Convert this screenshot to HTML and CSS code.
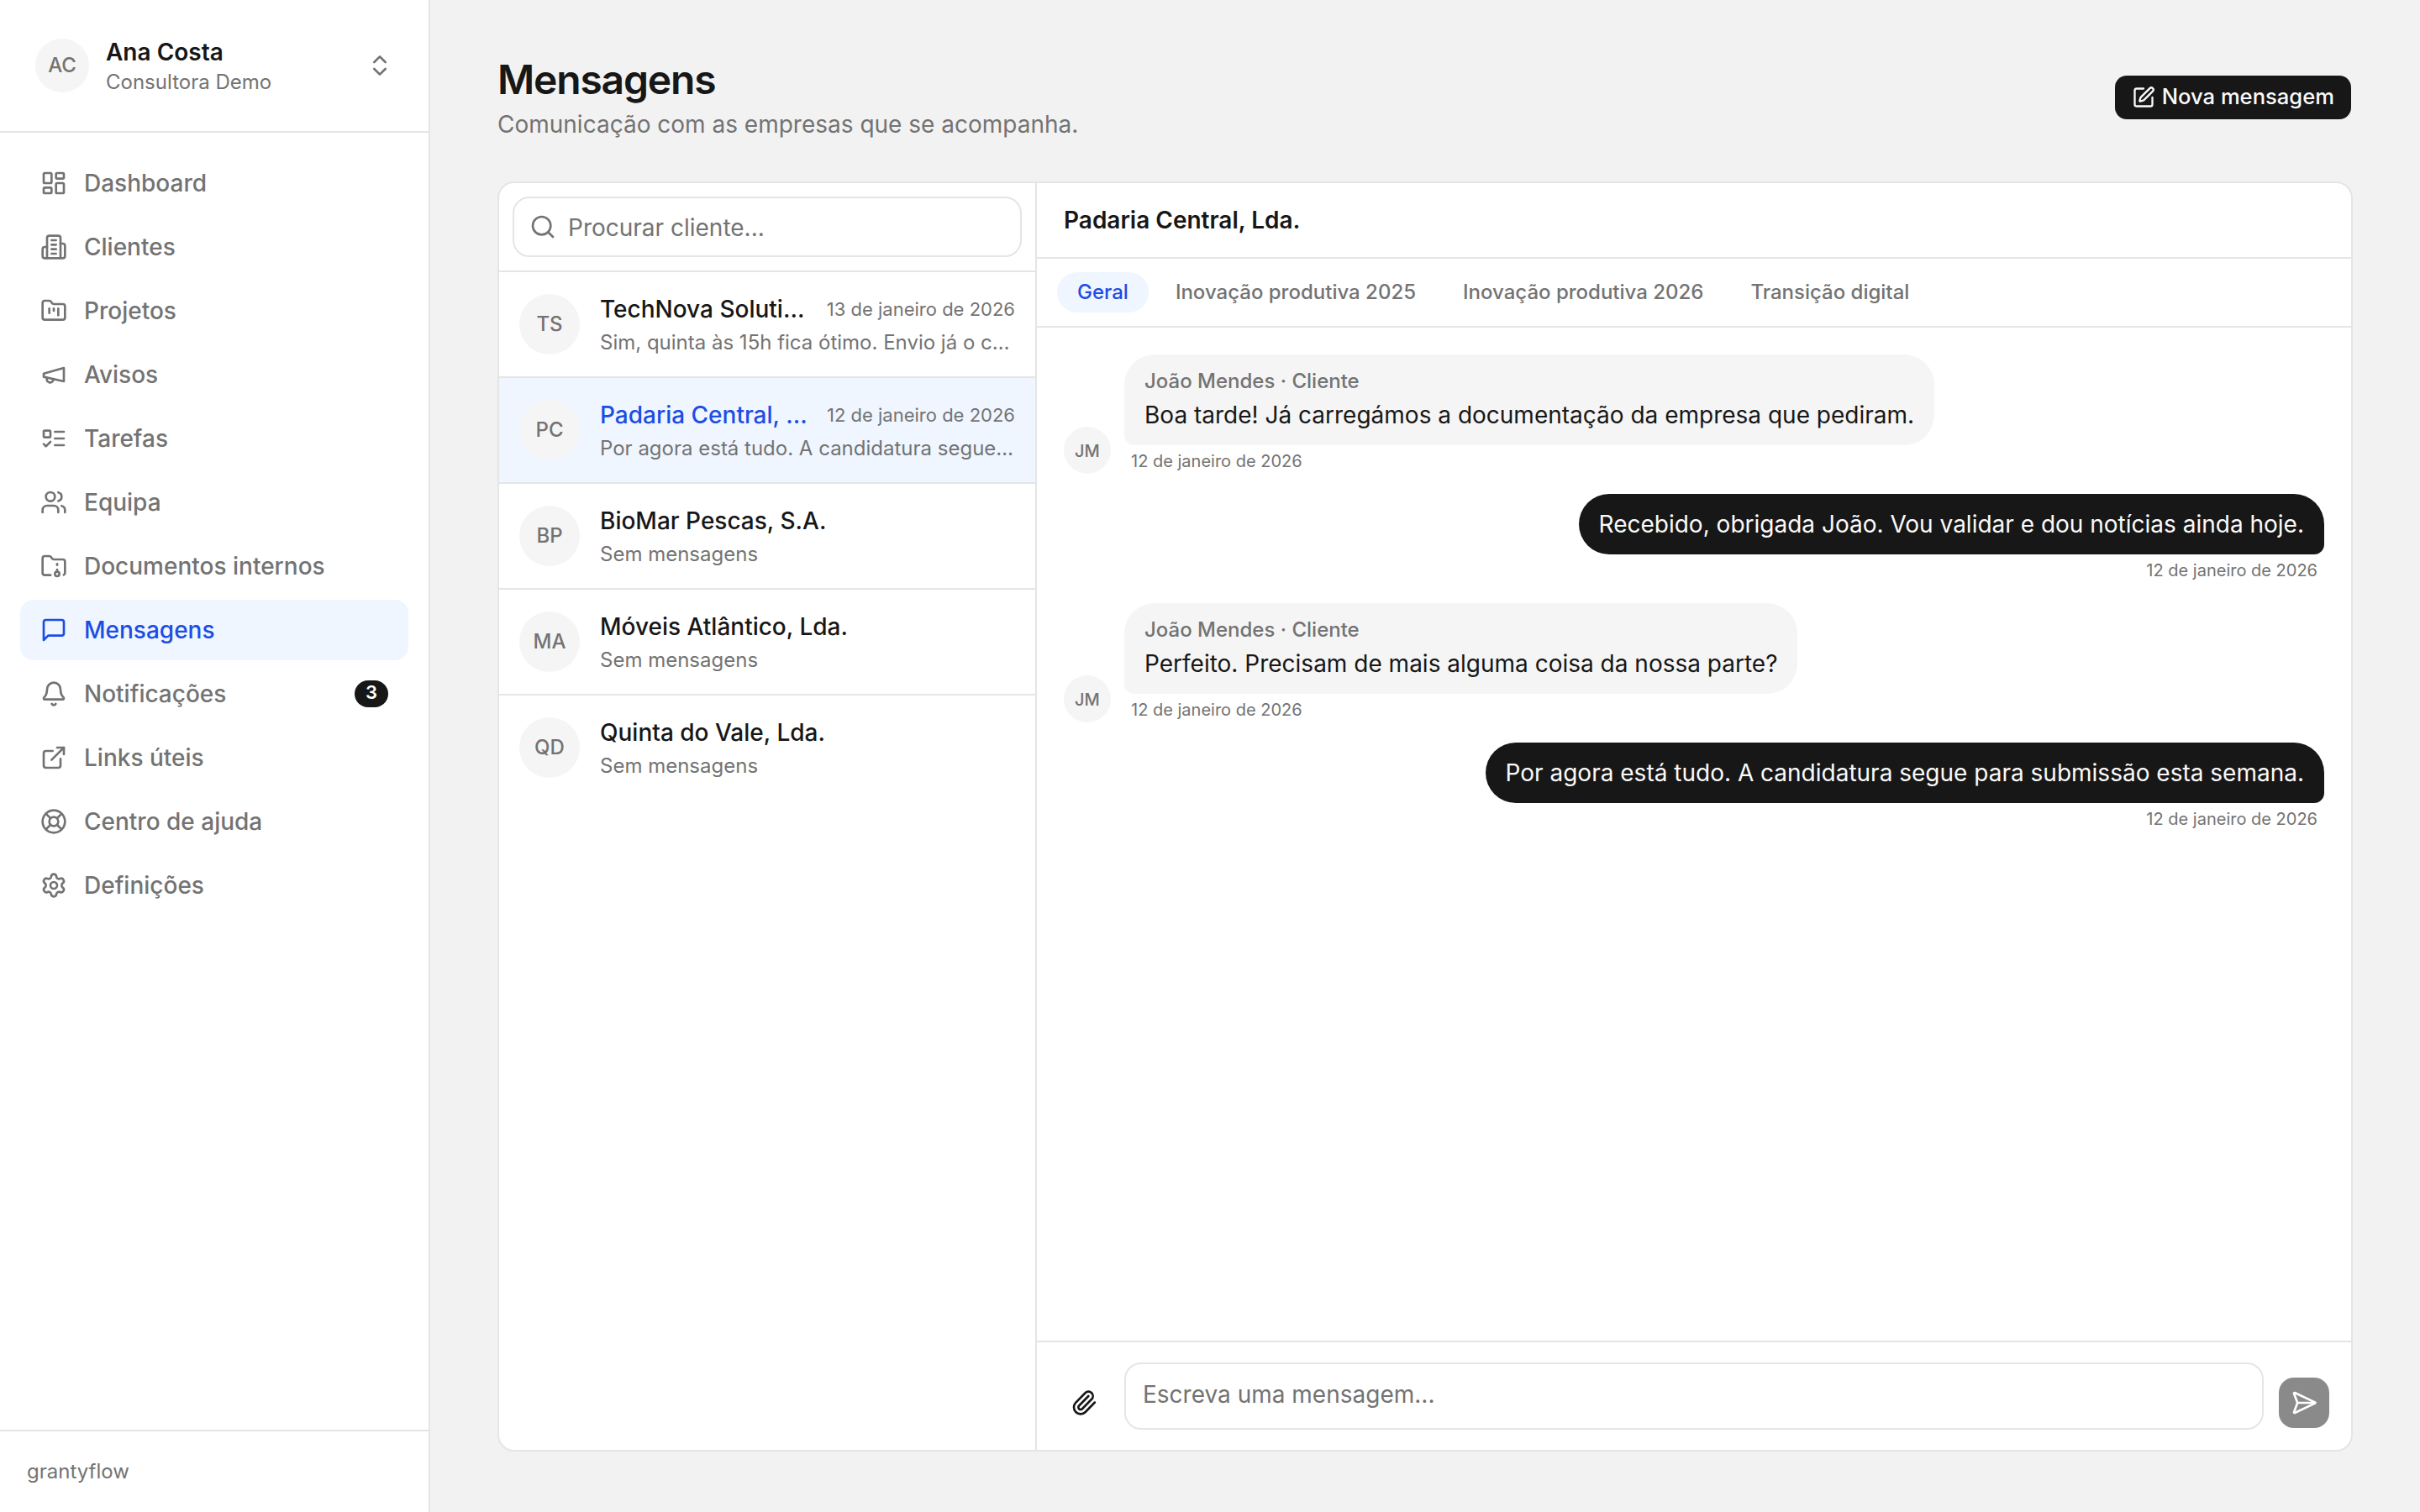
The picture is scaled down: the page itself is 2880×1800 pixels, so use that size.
FILE: index.html
```html
<!DOCTYPE html>
<html lang="pt">
  <head>
    <meta charset="utf-8" />
    <title>Mensagens - grantyflow</title>
    <link rel="stylesheet" href="styles.css" />
  </head>
  <body>
    <aside class="sidebar">
      <div class="account">
        <span class="avatar">AC</span>
        <div class="account-text">
          <div class="account-name">Ana Costa</div>
          <div class="account-org">Consultora Demo</div>
        </div>
        <svg class="icon" viewBox="0 0 24 24"><path d="m7 15 5 5 5-5" /><path d="m7 9 5-5 5 5" /></svg>
      </div>

      <nav class="nav">
        <a class="nav-item">
          <svg class="icon" viewBox="0 0 24 24"><rect width="7" height="9" x="3" y="3" rx="1" /><rect width="7" height="5" x="14" y="3" rx="1" /><rect width="7" height="9" x="14" y="12" rx="1" /><rect width="7" height="5" x="3" y="16" rx="1" /></svg>
          <span>Dashboard</span>
        </a>
        <a class="nav-item">
          <svg class="icon" viewBox="0 0 24 24"><path d="M6 22V4a2 2 0 0 1 2-2h8a2 2 0 0 1 2 2v18Z" /><path d="M6 12H4a2 2 0 0 0-2 2v6a2 2 0 0 0 2 2h2" /><path d="M18 9h2a2 2 0 0 1 2 2v9a2 2 0 0 1-2 2h-2" /><path d="M10 6h4" /><path d="M10 10h4" /><path d="M10 14h4" /><path d="M10 18h4" /></svg>
          <span>Clientes</span>
        </a>
        <a class="nav-item">
          <svg class="icon" viewBox="0 0 24 24"><path d="M4 20h16a2 2 0 0 0 2-2V8a2 2 0 0 0-2-2h-7.93a2 2 0 0 1-1.66-.9l-.82-1.2A2 2 0 0 0 7.93 3H4a2 2 0 0 0-2 2v13c0 1.1.9 2 2 2Z" /><path d="M8 10v4" /><path d="M12 10v2" /><path d="M16 10v6" /></svg>
          <span>Projetos</span>
        </a>
        <a class="nav-item">
          <svg class="icon" viewBox="0 0 24 24"><path d="m3 11 18-5v12L3 14v-3z" /><path d="M11.6 16.8a3 3 0 1 1-5.8-1.6" /></svg>
          <span>Avisos</span>
        </a>
        <a class="nav-item">
          <svg class="icon" viewBox="0 0 24 24"><rect x="3" y="5" width="6" height="6" rx="1" /><path d="m3 17 2 2 4-4" /><path d="M13 6h8" /><path d="M13 12h8" /><path d="M13 18h8" /></svg>
          <span>Tarefas</span>
        </a>
        <a class="nav-item">
          <svg class="icon" viewBox="0 0 24 24"><path d="M16 21v-2a4 4 0 0 0-4-4H6a4 4 0 0 0-4 4v2" /><circle cx="9" cy="7" r="4" /><path d="M22 21v-2a4 4 0 0 0-3-3.87" /><path d="M16 3.13a4 4 0 0 1 0 7.75" /></svg>
          <span>Equipa</span>
        </a>
        <a class="nav-item">
          <svg class="icon" viewBox="0 0 24 24"><circle cx="15" cy="19" r="2" /><path d="M20.9 19.8A2 2 0 0 0 22 18V8a2 2 0 0 0-2-2h-7.9a2 2 0 0 1-1.69-.9L9.6 3.9A2 2 0 0 0 7.93 3H4a2 2 0 0 0-2 2v13a2 2 0 0 0 2 2h5.1" /><path d="M15 11v-1" /><path d="M15 17v-2" /></svg>
          <span>Documentos internos</span>
        </a>
        <a class="nav-item active">
          <svg class="icon" viewBox="0 0 24 24"><path d="M21 15a2 2 0 0 1-2 2H7l-4 4V5a2 2 0 0 1 2-2h14a2 2 0 0 1 2 2z" /></svg>
          <span>Mensagens</span>
        </a>
        <a class="nav-item">
          <svg class="icon" viewBox="0 0 24 24"><path d="M10.268 21a2 2 0 0 0 3.464 0" /><path d="M3.262 15.326A1 1 0 0 0 4 17h16a1 1 0 0 0 .74-1.673C19.41 13.956 18 12.499 18 8A6 6 0 0 0 6 8c0 4.499-1.411 5.956-2.738 7.326" /></svg>
          <span>Notificações</span>
          <span class="nav-badge">3</span>
        </a>
        <a class="nav-item">
          <svg class="icon" viewBox="0 0 24 24"><path d="M15 3h6v6" /><path d="M10 14 21 3" /><path d="M18 13v6a2 2 0 0 1-2 2H5a2 2 0 0 1-2-2V8a2 2 0 0 1 2-2h6" /></svg>
          <span>Links úteis</span>
        </a>
        <a class="nav-item">
          <svg class="icon" viewBox="0 0 24 24"><circle cx="12" cy="12" r="10" /><path d="m4.93 4.93 4.24 4.24" /><path d="m14.83 9.17 4.24-4.24" /><path d="m14.83 14.83 4.24 4.24" /><path d="m9.17 14.83-4.24 4.24" /><circle cx="12" cy="12" r="4" /></svg>
          <span>Centro de ajuda</span>
        </a>
        <a class="nav-item">
          <svg class="icon" viewBox="0 0 24 24"><path d="M9.671 4.136a2.34 2.34 0 0 1 4.659 0 2.34 2.34 0 0 0 3.319 1.915 2.34 2.34 0 0 1 2.33 4.033 2.34 2.34 0 0 0 0 3.831 2.34 2.34 0 0 1-2.33 4.033 2.34 2.34 0 0 0-3.319 1.915 2.34 2.34 0 0 1-4.659 0 2.34 2.34 0 0 0-3.32-1.915 2.34 2.34 0 0 1-2.33-4.033 2.34 2.34 0 0 0 0-3.831A2.34 2.34 0 0 1 6.35 6.051a2.34 2.34 0 0 0 3.319-1.915" /><circle cx="12" cy="12" r="3" /></svg>
          <span>Definições</span>
        </a>
      </nav>

      <div class="sidebar-footer">grantyflow</div>
    </aside>

    <main class="main">
      <header class="page-header">
        <div>
          <h1>Mensagens</h1>
          <p>Comunicação com as empresas que se acompanha.</p>
        </div>
        <button class="btn-new">
          <svg class="icon" viewBox="0 0 24 24"><path d="M12 3H5a2 2 0 0 0-2 2v14a2 2 0 0 0 2 2h14a2 2 0 0 0 2-2v-7" /><path d="M18.375 2.625a1 1 0 0 1 3 3l-9.013 9.014a2 2 0 0 1-.853.505l-2.873.84a.5.5 0 0 1-.62-.62l.84-2.873a2 2 0 0 1 .506-.852z" /></svg>
          <span>Nova mensagem</span>
        </button>
      </header>

      <section class="inbox">
        <div class="clients">
          <div class="search">
            <div class="search-box">
              <svg class="icon" viewBox="0 0 24 24"><path d="m21 21-4.34-4.34" /><circle cx="11" cy="11" r="8" /></svg>
              <input type="text" placeholder="Procurar cliente..." />
            </div>
          </div>
          <div class="client">
            <span class="avatar avatar-lg">TS</span>
            <div class="client-text">
              <div class="client-top">
                <span class="client-name">TechNova Solutions, Lda.</span>
                <span class="client-date">13 de janeiro de 2026</span>
              </div>
              <div class="client-preview">Sim, quinta às 15h fica ótimo. Envio já o convite.</div>
            </div>
          </div>
          <div class="client selected">
            <span class="avatar avatar-lg">PC</span>
            <div class="client-text">
              <div class="client-top">
                <span class="client-name">Padaria Central, Lda.</span>
                <span class="client-date">12 de janeiro de 2026</span>
              </div>
              <div class="client-preview">Por agora está tudo. A candidatura segue para submissão esta semana.</div>
            </div>
          </div>
          <div class="client">
            <span class="avatar avatar-lg">BP</span>
            <div class="client-text">
              <div class="client-top"><span class="client-name">BioMar Pescas, S.A.</span></div>
              <div class="client-preview">Sem mensagens</div>
            </div>
          </div>
          <div class="client">
            <span class="avatar avatar-lg">MA</span>
            <div class="client-text">
              <div class="client-top"><span class="client-name">Móveis Atlântico, Lda.</span></div>
              <div class="client-preview">Sem mensagens</div>
            </div>
          </div>
          <div class="client">
            <span class="avatar avatar-lg">QD</span>
            <div class="client-text">
              <div class="client-top"><span class="client-name">Quinta do Vale, Lda.</span></div>
              <div class="client-preview">Sem mensagens</div>
            </div>
          </div>
        </div>

        <div class="thread">
          <div class="thread-header">Padaria Central, Lda.</div>
          <div class="tabs">
            <span class="tab active">Geral</span>
            <span class="tab">Inovação produtiva 2025</span>
            <span class="tab">Inovação produtiva 2026</span>
            <span class="tab">Transição digital</span>
          </div>

          <div class="messages">
            <div class="message">
              <span class="avatar avatar-sm">JM</span>
              <div class="message-body">
                <div class="bubble">
                  <div class="bubble-author">João Mendes · Cliente</div>
                  <div>Boa tarde! Já carregámos a documentação da empresa que pediram.</div>
                </div>
                <div class="message-date">12 de janeiro de 2026</div>
              </div>
            </div>
            <div class="message own">
              <div class="message-body">
                <div class="bubble">Recebido, obrigada João. Vou validar e dou notícias ainda hoje.</div>
                <div class="message-date">12 de janeiro de 2026</div>
              </div>
            </div>
            <div class="message">
              <span class="avatar avatar-sm">JM</span>
              <div class="message-body">
                <div class="bubble">
                  <div class="bubble-author">João Mendes · Cliente</div>
                  <div>Perfeito. Precisam de mais alguma coisa da nossa parte?</div>
                </div>
                <div class="message-date">12 de janeiro de 2026</div>
              </div>
            </div>
            <div class="message own">
              <div class="message-body">
                <div class="bubble">Por agora está tudo. A candidatura segue para submissão esta semana.</div>
                <div class="message-date">12 de janeiro de 2026</div>
              </div>
            </div>
          </div>

          <div class="composer">
            <button class="btn-icon">
              <svg class="icon" viewBox="0 0 24 24"><path d="m16 6-8.414 8.586a2 2 0 0 0 2.829 2.829l8.414-8.586a4 4 0 1 0-5.657-5.657l-8.379 8.551a6 6 0 1 0 8.485 8.485l8.379-8.551" /></svg>
            </button>
            <textarea placeholder="Escreva uma mensagem..."></textarea>
            <button class="btn-icon btn-send" disabled>
              <svg class="icon" viewBox="0 0 24 24"><path d="M3.714 3.048a.498.498 0 0 0-.683.627l2.843 7.627a2 2 0 0 1 0 1.396l-2.842 7.627a.498.498 0 0 0 .682.627l18-8.5a.5.5 0 0 0 0-.904z" /><path d="M6 12h16" /></svg>
            </button>
          </div>
        </div>
      </section>
    </main>
  </body>
</html>
```

FILE: styles.css
```css
* {
  box-sizing: border-box;
}
body {
  margin: 0;
  height: 100vh;
  display: flex;
  background: #f2f2f2;
  color: #171717;
  font-family: Inter, "Liberation Sans", sans-serif;
  font-size: 28px;
  line-height: 40px;
  font-optical-sizing: none;
  -webkit-font-smoothing: antialiased;
}
h1,
p {
  margin: 0;
}
button,
input,
textarea {
  font: inherit;
  color: inherit;
}
.icon {
  width: 32px;
  height: 32px;
  flex-shrink: 0;
  fill: none;
  stroke: currentColor;
  stroke-width: 2;
  stroke-linecap: round;
  stroke-linejoin: round;
}
.avatar {
  width: 64px;
  height: 64px;
  flex-shrink: 0;
  display: flex;
  align-items: center;
  justify-content: center;
  border-radius: 50%;
  background: #f5f5f5;
  color: #737373;
  font-size: 24px;
  font-weight: 500;
}
.avatar-lg {
  width: 72px;
  height: 72px;
}
.avatar-sm {
  width: 56px;
  height: 56px;
  padding-top: 1px;
  font-size: 20px;
}

/* Sidebar */
.sidebar {
  width: 512px;
  flex-shrink: 0;
  display: flex;
  flex-direction: column;
  background: #fff;
  border-right: 2px solid #e5e5e5;
}
.account {
  height: 158px;
  padding: 0 42px;
  display: flex;
  align-items: center;
  gap: 20px;
  border-bottom: 2px solid #e5e5e5;
  color: #737373;
}
.account-text {
  flex: 1;
}
.account-name {
  color: #171717;
  font-weight: 600;
}
.account-org {
  font-size: 24px;
  line-height: 32px;
}
.nav {
  flex: 1;
  padding: 24px;
  display: flex;
  flex-direction: column;
  gap: 4px;
}
.nav-item {
  height: 72px;
  padding: 0 24px;
  display: flex;
  align-items: center;
  gap: 20px;
  border-radius: 16px;
  color: #737373;
  font-weight: 500;
}
.nav-item.active {
  background: #eff6ff;
  color: #1c4de5;
}
.nav-badge {
  margin-left: auto;
  min-width: 40px;
  height: 32px;
  padding-bottom: 4px;
  display: flex;
  align-items: center;
  justify-content: center;
  border-radius: 16px;
  background: #171717;
  color: #fff;
  font-size: 22px;
  font-weight: 600;
}
.sidebar-footer {
  height: 98px;
  padding: 0 32px;
  display: flex;
  align-items: center;
  border-top: 2px solid #e5e5e5;
  color: #737373;
  font-size: 24px;
}

/* Page */
.main {
  flex: 1;
  min-width: 0;
  padding: 64px 80px 72px;
  display: flex;
  flex-direction: column;
}
.page-header {
  height: 152px;
  display: flex;
  justify-content: space-between;
}
.page-header h1 {
  padding-top: 1px;
  font-size: 48px;
  font-weight: 600;
  line-height: 60px;
  letter-spacing: -1.2px;
}
.page-header p {
  margin-top: 3px;
  color: #737373;
}
.btn-new {
  align-self: flex-start;
  margin-top: 24px;
  height: 56px;
  padding: 0 20px;
  display: flex;
  align-items: center;
  gap: 8px;
  border: 2px solid transparent;
  border-radius: 16px;
  background: #171717;
  background-clip: padding-box;
  color: #fafafa;
  font-size: 25.6px;
  font-weight: 500;
}
.btn-new span {
  padding-bottom: 2px;
}
.btn-new .icon {
  width: 28px;
  height: 28px;
}

.inbox {
  flex: 1;
  min-height: 0;
  display: flex;
  overflow: hidden;
  background: #fff;
  border: 2px solid #e5e5e5;
  border-radius: 20px;
}

/* Client list */
.clients {
  width: 640px;
  flex-shrink: 0;
  border-right: 2px solid #e5e5e5;
}
.search {
  padding: 16px;
  border-bottom: 2px solid #e5e5e5;
}
.search-box {
  height: 72px;
  padding: 0 18px;
  display: flex;
  align-items: center;
  gap: 14px;
  border: 2px solid #e5e5e5;
  border-radius: 20px;
  color: #737373;
}
.search-box input {
  flex: 1;
  min-width: 0;
  height: 42px;
  padding: 2px 0 0;
  border: 0;
  outline: none;
  background: none;
}
::placeholder {
  color: #737373;
  opacity: 1;
}
.client {
  height: 126px;
  padding: 0 24px;
  display: flex;
  align-items: center;
  gap: 24px;
  border-bottom: 2px solid #e5e5e5;
}
.client:last-child {
  border-bottom: 2px solid transparent;
}
.client.selected {
  background: #eff6ff;
}
.client-text {
  flex: 1;
  min-width: 0;
}
.client-top {
  display: flex;
  align-items: center;
  gap: 16px;
}
.client-name,
.client-preview {
  overflow: hidden;
  white-space: nowrap;
  text-overflow: ellipsis;
}
.client-name {
  flex: 1;
  font-weight: 500;
}
.client.selected .client-name {
  color: #1c4de5;
}
.client-date {
  color: #737373;
  font-size: 22px;
}
.client-preview {
  margin-top: 4px;
  color: #737373;
  font-size: 24px;
  line-height: 32px;
}

/* Thread */
.thread {
  flex: 1;
  min-width: 0;
  display: flex;
  flex-direction: column;
}
.thread-header {
  height: 90px;
  padding: 0 32px;
  display: flex;
  align-items: center;
  border-bottom: 2px solid #e5e5e5;
  font-weight: 600;
}
.tabs {
  padding: 16px 24px;
  display: flex;
  gap: 8px;
  border-bottom: 2px solid #e5e5e5;
}
.tab {
  height: 48px;
  padding: 0 24px;
  display: flex;
  align-items: center;
  border-radius: 24px;
  color: #737373;
  font-size: 24px;
  font-weight: 500;
}
.tab.active {
  background: #eff6ff;
  color: #1c4de5;
}
.messages {
  flex: 1;
  padding: 32px;
  display: flex;
  flex-direction: column;
  gap: 24px;
}
.message {
  display: flex;
  align-items: flex-end;
  gap: 16px;
}
.message.own {
  justify-content: flex-end;
}
.bubble {
  padding: 16px 24px;
  border-radius: 36px;
  border-bottom-left-radius: 12px;
  background: #f5f5f5;
}
.message.own .bubble {
  border-radius: 36px;
  border-bottom-right-radius: 12px;
  background: #171717;
  color: #fafafa;
}
.bubble-author {
  margin-bottom: 4px;
  color: #737373;
  font-size: 24px;
  font-weight: 500;
  line-height: 32px;
}
.message-date {
  margin-top: 4px;
  padding: 0 8px;
  color: #737373;
  font-size: 20px;
  line-height: 30px;
}
.message.own .message-date {
  text-align: right;
}

.composer {
  padding: 24px;
  display: flex;
  align-items: flex-end;
  gap: 16px;
  border-top: 2px solid #e5e5e5;
}
.composer textarea {
  flex: 1;
  height: 80px;
  padding: 16px 20px;
  border: 2px solid #e5e5e5;
  border-radius: 20px;
  outline: none;
  resize: none;
  background: none;
}
.btn-icon {
  width: 64px;
  height: 64px;
  padding: 0;
  display: flex;
  align-items: center;
  justify-content: center;
  border: 2px solid transparent;
  border-radius: 20px;
  background: none;
  background-clip: padding-box;
}
.btn-send {
  background-color: #171717;
  color: #fff;
  opacity: 0.5;
}
```
